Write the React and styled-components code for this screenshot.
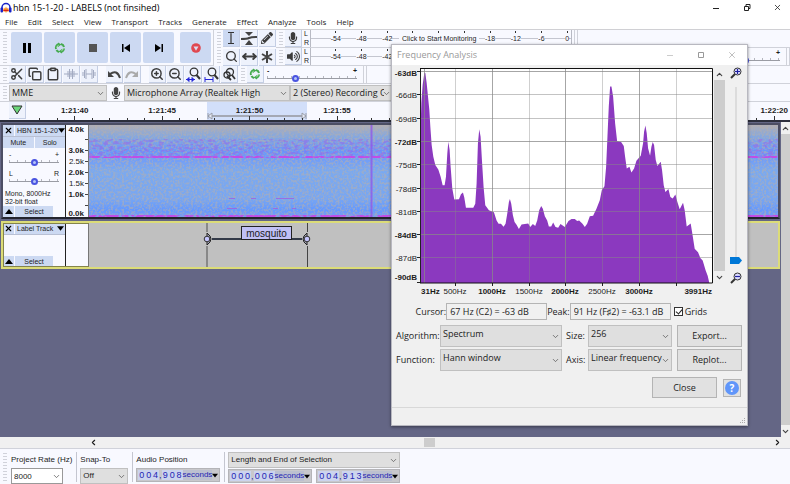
import { useId } from "react";
import styled, { createGlobalStyle } from "styled-components";
import {
  Scissors,
  Copy,
  Clipboard,
  Search,
  ZoomIn,
  ZoomOut,
  MoveHorizontal,
  Asterisk,
  ChevronDown,
  ChevronUp,
  ChevronLeft,
  ChevronRight,
  X,
} from "lucide-react";
import { FaMicrophone, FaVolumeUp, FaPencilAlt } from "react-icons/fa";

const GlobalStyle = createGlobalStyle`
  * {
    box-sizing: border-box;
  }

  body {
    margin: 0;
    background: #f8f9ff;
    color: #1c1c1c;
    font-family: "Open Sans", sans-serif;
    font-size: 9px;
    line-height: 12px;
  }

  button, select, input {
    margin: 0;
    padding: 0;
    border: 0;
    border-radius: 0;
    color: inherit;
    font: inherit;
    outline: none;
  }

  svg {
    display: block;
    flex: none;
  }
`;

const menus = ["File", "Edit", "Select", "View", "Transport", "Tracks", "Generate", "Effect", "Analyze", "Tools", "Help"];
const recordMarks = ["-54", "-48", "-42", "", "", "", "-18", "-12", "-6", "0"];
const playbackMarks = ["-54", "-48", "-42", "", "", "", "", "", "", ""];
const times = ["1:21:40", "1:21:45", "1:21:50", "1:21:55", "1:22:00", "1:22:05", "1:22:10", "1:22:15", "1:22:20"];
const dbLabels = [63, 66, 69, 72, 75, 78, 81, 84, 87, 90];
const boldDb = [63, 72, 84, 90];

const spectrum =
  "91,667 91,230 94,130 98,75 103,40 106,40 110,70 114,110 118,150 121,200 125,255 130,290 136,315 145,328 152,350 158,375 164,375 168,350 172,280 175,245 179,270 182,320 187,385 193,418 207,417 213,402 219,397 223,412 228,442 250,442 256,430 260,370 264,250 268,208 272,230 276,300 281,380 286,435 297,450 312,456 320,480 326,490 333,490 341,499 347,490 352,460 357,425 360,416 364,430 369,465 374,485 380,493 387,506 395,492 415,489 421,500 429,491 436,497 442,480 448,450 454,437 459,445 465,468 472,480 477,498 484,498 490,486 497,500 505,502 512,491 525,500 536,482 545,476 555,476 562,482 568,480 578,490 585,500 592,490 600,468 610,466 620,445 630,420 636,390 644,378 649,320 653,230 657,140 661,80 665,80 670,110 676,190 682,243 694,246 702,258 706,290 711,325 719,320 725,337 733,325 740,302 753,287 760,250 763,215 767,197 771,220 775,265 781,287 785,260 789,246 793,255 798,300 803,318 813,305 817,330 822,375 827,395 836,386 842,410 849,415 857,403 863,425 870,447 880,427 885,450 891,498 903,489 908,520 915,565 925,575 932,592 939,600 948,630 954,645 959,667";

const Logo = () => (
  <svg width="12" height="12" viewBox="0 0 24 24">
    <path d="M4 14V11a8 8 0 0 1 16 0v3" fill="none" stroke="#1822c8" strokeWidth="3" />
    <rect x="1" y="11" width="5" height="10" rx="2" fill="#1822c8" />
    <rect x="18" y="11" width="5" height="10" rx="2" fill="#1822c8" />
    <path d="M6 17l2-6 2 3 2-5 2 5 2-3 2 6-2 3-2-2-2 4-2-4-2 2z" fill="#f5821f" />
    <path d="M7 17h10" stroke="#d81e1e" strokeWidth="2" />
  </svg>
);

const LoopIcon = ({ size }) => (
  <svg width={size} height={size} viewBox="0 0 24 24">
    <path d="M4 14a8 8 0 0 1 6-10M14 4a8 8 0 0 1 6 6M20 13a8 8 0 0 1-6 7M10 20a8 8 0 0 1-5-4" fill="none" stroke="#46aa50" strokeWidth="4" />
    <path d="M8 1l7 4-7 5zM16 23l-7-4 7-5z" fill="#46aa50" />
    <path d="M5 12a7 7 0 0 1 5-6M19 12a7 7 0 0 1-5 6" fill="none" stroke="#9edba0" strokeWidth="1.5" />
  </svg>
);

const TransportIcon = ({ name }) => {
  if (name === "Play") return <LoopIcon size={12} />;
  return (
    <svg width="12" height="12" viewBox="0 0 12 12">
      {name === "Pause" && <path d="M2 1h3v10H2zM7 1h3v10H7z" fill="#000" />}
      {name === "Stop" && <path d="M2 2h8v8H2z" fill="#555" />}
      {name === "Skip to Start" && <path d="M2 2h1.500v8H2zM10 2v8L4 6z" fill="#000" />}
      {name === "Skip to End" && <path d="M8.500 2H10v8H8.500zM2 2v8l6-4z" fill="#000" />}
      {name === "Record" && (
        <>
          <circle cx="6" cy="6" r="4.800" fill="#e04850" />
          <path d="M3.500 4.500h5L6 8.800z" fill="#dcdcf0" />
        </>
      )}
    </svg>
  );
};

const SelectionIcon = () => (
  <svg width="12" height="14" viewBox="0 0 12 14">
    <path d="M3 1.500h2.500L6 2l.5-.5H9M6 2v10M3 12.500h2.500L6 12l.5.5H9" fill="none" stroke="#333" strokeWidth="1.200" />
  </svg>
);

const EnvelopeIcon = () => (
  <svg width="16" height="14" viewBox="0 0 16 14">
    <path d="M4 1h8L8 5zM4 14h8L8 9z" fill="#444" />
    <path d="M0 8q6 0 8-1t8-1" fill="none" stroke="#444" strokeWidth="2" />
  </svg>
);

const TrimIcon = ({ silence }) => (
  <svg width="14" height="12" viewBox="0 0 14 12">
    <path
      d={silence ? "M1 4v4M2.500 2v8M4 1v10M10 1v10M11.500 2v8M13 4v4M4 6h6" : "M0 6h14M4 3v6M5.500 1v10M7 3v6M8.500 1v10M10 3v6"}
      stroke="#a3abc2"
      fill="none"
    />
  </svg>
);

const UndoIcon = ({ redo }) => (
  <svg width="14" height="12" viewBox="0 0 14 12">
    <g transform={redo ? "matrix(-1 0 0 1 14 0)" : undefined}>
      <path d="M3 6q7-5 10 4" fill="none" stroke={redo ? "#aaa" : "#444"} strokeWidth="2" />
      <path d="M1 3v6h6z" fill={redo ? "#aaa" : "#444"} />
    </g>
  </svg>
);

const FitIcon = ({ kind }) => (
  <svg width="15" height="15" viewBox="0 0 15 15">
    <circle cx="8" cy="5" r="3.800" fill="none" stroke="#333" strokeWidth="1.300" />
    <path d="M10.500 8l3.500 4" stroke="#333" strokeWidth="2" />
    {kind === "selection" && <path d="M0 12.500h9M3 10.500v4l-2-2zM6 10.500v4l2-2z" stroke="#2424d8" fill="#2424d8" />}
    {kind === "project" && <path d="M1 10v5M9 10v5M1 12.500h8" stroke="#2424d8" fill="none" />}
  </svg>
);

const ZoomToggleIcon = () => (
  <svg width="14" height="14" viewBox="0 0 14 14">
    <circle cx="8" cy="5" r="3.500" fill="none" stroke="#333" strokeWidth="1.300" />
    <circle cx="5" cy="8" r="3" fill="none" stroke="#333" strokeWidth="1.300" />
    <path d="M10 8l3 4M5 9l4 4" stroke="#333" strokeWidth="1.800" />
  </svg>
);

const MagnifierIcon = ({ plus }) => (
  <svg width="12" height="12" viewBox="0 0 12 12">
    <path d="M1 11l4-4" stroke="#333" strokeWidth="2" />
    <circle cx="7.500" cy="4.500" r="3.500" fill="#dcdcff" stroke="#333" />
    <path d={plus ? "M5 4.500h5M7.500 2v5" : "M5 4.500h5"} stroke="#2020a0" strokeWidth="1.200" />
  </svg>
);

const Triangle = ({ up, size = 8 }) => (
  <svg width={size} height="5" viewBox="0 0 8 5">
    <path d={up ? "M0 5l4-5 4 5z" : "M0 0h8l-4 5z"} fill="#000" />
  </svg>
);

const Handle = ({ x, flip }) => (
  <g transform={`translate(${x} 16)`}>
    <path d={flip ? "M0-6q-8 6 0 12z" : "M0-6q8 6 0 12z"} fill="#a8a8b8" stroke="#222" />
    <circle r="2.800" fill="#c4c4fc" stroke="#333" />
  </g>
);

const Picker = ({ label, options, ...rest }) => (
  <PickerBox {...rest}>
    <select aria-label={label}>
      {options.map((o) => (
        <option key={o}>{o}</option>
      ))}
    </select>
    <ChevronDown size={9} strokeWidth={2} />
  </PickerBox>
);

const Meter = ({ label, message, icon, marks }) => (
  <MeterArea>
    <ToolButton aria-label={label}>{icon}</ToolButton>
    <Channels>
      <span>L</span>
      <span>R</span>
    </Channels>
    <MeterScale>
      <div className="marks">
        {marks.map((m, i) => (
          <span key={i}>{m && <b>{m}</b>}</span>
        ))}
      </div>
      {message && <button className="message">{message}</button>}
    </MeterScale>
  </MeterArea>
);

const Knob = ({ label, left, right, value, ...rest }) => (
  <KnobBox {...rest}>
    <span>
      <i>{left}</i>
      <i>{right}</i>
    </span>
    <Slider type="range" aria-label={label} defaultValue={value} />
  </KnobBox>
);

const TimeField = ({ label, digits }) => (
  <TimeBox role="group" aria-label={label}>
    {[...digits].map((d, i) => (
      <span key={i} className={d === "," ? "comma" : "digit"}>{d}</span>
    ))}
    <span className="unit">seconds</span>
    <button aria-label={`${label} format`}>
      <Triangle size={6} />
    </button>
  </TimeBox>
);

const Spectrogram = () => {
  const id = useId();
  return (
    <svg width="100%" height="100%" viewBox="0 0 689 92" preserveAspectRatio="none">
      <defs>
        <linearGradient id={`${id}base`} x2="0" y2="1">
          <stop offset="0" stopColor="#b0adb5" />
          <stop offset="0.12" stopColor="#86a8de" />
          <stop offset="0.28" stopColor="#6898fa" />
          <stop offset="0.36" stopColor="#709cf8" />
          <stop offset="0.5" stopColor="#7aa9f0" />
          <stop offset="0.8" stopColor="#78a6f2" />
          <stop offset="0.93" stopColor="#6398ff" />
          <stop offset="1" stopColor="#7a9cf0" />
        </linearGradient>
        <filter id={`${id}tan`} x="0" y="0" width="1" height="1" colorInterpolationFilters="sRGB">
          <feTurbulence type="fractalNoise" baseFrequency="0.45" numOctaves="2" seed="4" />
          <feColorMatrix values="0 0 0 0 0.72  0 0 0 0 0.69  0 0 0 0 0.67  4 0 0 0 -1.7" />
        </filter>
        <filter id={`${id}violet`} x="0" y="0" width="1" height="1" colorInterpolationFilters="sRGB">
          <feTurbulence type="fractalNoise" baseFrequency="0.2 0.4" numOctaves="2" seed="9" />
          <feColorMatrix values="0 0 0 0 0.6  0 0 0 0 0.38  0 0 0 0 0.92  5 0 0 0 -2.3" />
        </filter>
        <filter id={`${id}line`} x="0" y="0" width="1" height="1" colorInterpolationFilters="sRGB">
          <feTurbulence type="fractalNoise" baseFrequency="0.2 0.3" numOctaves="2" seed="2" />
          <feColorMatrix values="0 0 0 0 0.76  0 0 0 0 0.3  0 0 0 0 0.9  5 0 0 0 -1.6" />
        </filter>
      </defs>
      <rect width="689" height="92" fill={`url(#${id}base)`} />
      <rect width="689" height="92" filter={`url(#${id}tan)`} opacity="0.55" />
      <rect y="14" width="689" height="19" filter={`url(#${id}violet)`} opacity="0.5" />
      <rect y="31" width="689" height="2" filter={`url(#${id}line)`} />
      <rect y="90" width="689" height="2" filter={`url(#${id}line)`} />
      <path d="M282.500 0v92" stroke="#9058e8" strokeWidth="2" opacity="0.8" />
      <path d="M140 73.500h6M162 73.500h5M187 73.500h18M138 83.500h10M184 83.500h5M203 83.500h4" stroke="#a060e0" opacity="0.8" />
    </svg>
  );
};

const FrequencyPlot = () => (
  <svg width="320" height="232" viewBox="0 0 320 232" role="img" aria-label="Frequency spectrum">
    <rect x="26" y="2" width="292" height="215" fill="#fff" />
    <svg x="26" y="2" width="292" height="215" viewBox="90 25 877 642" preserveAspectRatio="none">
      <polygon points={spectrum} fill="#8b39bf" />
    </svg>
    {dbLabels.map((db, i) => {
      const y = 6 + Math.round(i * 23.3);
      return (
        <g key={db}>
          {i < 9 && <path d={`M26 ${y - 0.5}h292`} stroke="#888" strokeOpacity={boldDb.includes(db) ? 0.75 : 0.5} />}
          <path d={`M23 ${i < 9 ? y - 0.5 : 216.5}h3`} stroke="#222" />
          <text x="23" y={i < 9 ? y + (i ? 3 : 4) : 214} textAnchor="end" fontWeight={boldDb.includes(db) ? 700 : 400}>
            {`-${db}dB`}
          </text>
        </g>
      );
    })}
    {[30, 61, 98, 135, 171, 208, 245, 282].map((x, i) => (
      <path key={x} d={`M${x + 0.5} 2v215`} stroke="#888" strokeOpacity={i % 2 ? 0.4 : 0.75} />
    ))}
    {[500, 1000, 1500, 2000, 2500, 3000].map((hz, i) => (
      <g key={hz}>
        <path d={`M${61.5 + Math.round(i * 36.8)} 217v3`} stroke="#222" />
        <text x={61 + Math.round(i * 36.8)} y="228" textAnchor="middle" fontWeight={i % 2 ? 700 : 400}>{`${hz}Hz`}</text>
      </g>
    ))}
    <text x="27" y="228" fontWeight="700">31Hz</text>
    <text x="318" y="228" textAnchor="end" fontWeight="700">3991Hz</text>
    <path d="M282.500 217v3M26.500 2v215" stroke="#222" />
    <path d="M26 2.500h292.500V217H26" fill="none" stroke="#111" />
  </svg>
);

const FrequencyDialog = () => (
  <Dialog role="dialog" aria-label="Frequency Analysis">
    <DialogTitle>
      <h2>Frequency Analysis</h2>
      <button aria-label="Minimize">
        <svg width="8" height="8"><path d="M1 4.500h6" stroke="#ccc" /></svg>
      </button>
      <button aria-label="Maximize">
        <svg width="8" height="8"><path d="M1.500 1.500h5v5h-5z" fill="none" stroke="#999" /></svg>
      </button>
      <button aria-label="Close window"><X size={10} strokeWidth={1.5} /></button>
    </DialogTitle>
    <PlotRow>
      <FrequencyPlot />
      <VScroll>
        <button aria-label="Scroll up"><ChevronUp size={9} strokeWidth={3} /></button>
        <div className="thumb" />
        <button aria-label="Scroll down"><ChevronDown size={9} strokeWidth={3} /></button>
      </VScroll>
      <ZoomColumn>
        <MagnifierIcon plus />
        <input type="range" aria-label="Vertical zoom" defaultValue={0} />
        <MagnifierIcon />
      </ZoomColumn>
    </PlotRow>
    <Readout>
      <label htmlFor="cursor">Cursor:</label>
      <input id="cursor" type="text" readOnly value="67 Hz (C2) = -63 dB" />
      <label htmlFor="peak">Peak:</label>
      <input id="peak" type="text" readOnly value="91 Hz (F♯2) = -63.1 dB" />
      <label className="check">
        <input type="checkbox" defaultChecked />
        Grids
      </label>
    </Readout>
    <Settings>
      <span>Algorithm:</span>
      <Picker label="Algorithm" options={["Spectrum"]} $raised />
      <span>Size:</span>
      <Picker label="Size" options={["256"]} $raised />
      <PushButton>Export...</PushButton>
      <span>Function:</span>
      <Picker label="Function" options={["Hann window"]} $raised />
      <span>Axis:</span>
      <Picker label="Axis" options={["Linear frequency"]} $raised />
      <PushButton>Replot...</PushButton>
    </Settings>
    <Actions>
      <PushButton>Close</PushButton>
      <HelpButton aria-label="Help"><b>?</b></HelpButton>
    </Actions>
    <StatusBar>
      <svg width="6" height="6" viewBox="0 0 6 6">
        <path d="M4 0h1v1H4zM2 2h1v1H2zM4 2h1v1H4zM0 4h1v1H0zM2 4h1v1H2zM4 4h1v1H4z" fill="#aaa" />
      </svg>
    </StatusBar>
  </Dialog>
);

const App = () => (
  <Page>
    <GlobalStyle />
    <TitleBar>
      <Logo />
      <h1>hbn 15-1-20 - LABELS (not finsihed)</h1>
      <button aria-label="Minimize">
        <svg width="8" height="8"><path d="M1 4.500h6" stroke="#222" /></svg>
      </button>
      <button aria-label="Restore">
        <svg width="8" height="8"><path d="M1.500 2.500h4v4h-4zM3 2.500V.5h4v4H5.500" fill="none" stroke="#222" /></svg>
      </button>
      <button aria-label="Close"><X size={9} strokeWidth={2} /></button>
    </TitleBar>
    <MenuBar>
      {menus.map((m) => (
        <button key={m}>{m}</button>
      ))}
    </MenuBar>

    <TopTools>
      <Transport>
        <Grip />
        {["Pause", "Play", "Stop", "Skip to Start", "Skip to End", "Record"].map((name) => (
          <TransportButton key={name} aria-label={name} $apart={name === "Record"}>
            <TransportIcon name={name} />
          </TransportButton>
        ))}
      </Transport>
      <Grip />
      <ToolGrid>
        <ToolButton aria-label="Selection Tool" $active><SelectionIcon /></ToolButton>
        <ToolButton aria-label="Envelope Tool"><EnvelopeIcon /></ToolButton>
        <ToolButton aria-label="Draw Tool"><FaPencilAlt size={12} /></ToolButton>
        <ToolButton aria-label="Zoom Tool"><Search size={13} strokeWidth={2.5} /></ToolButton>
        <ToolButton aria-label="Time Shift Tool"><MoveHorizontal size={15} strokeWidth={3} /></ToolButton>
        <ToolButton aria-label="Multi Tool">
          <svg width="14" height="14" viewBox="0 0 14 14">
            <path d="M7 1v12M2 4l10 6M12 4L2 10" stroke="#444" strokeWidth="2" />
          </svg>
        </ToolButton>
      </ToolGrid>
      <MeterRows>
        <ToolRow>
          <Grip />
          <Meter label="Record Meter" marks={recordMarks} message="Click to Start Monitoring" icon={<FaMicrophone size={12} />} />
          <Grip $line />
        </ToolRow>
        <ToolRow>
          <Grip />
          <Meter label="Playback Meter" marks={playbackMarks} icon={<FaVolumeUp size={13} />} />
          <Knob label="Playback Volume" left="-" right="+" value={63} $end />
          <Grip $line />
        </ToolRow>
      </MeterRows>
    </TopTools>

    <ToolRow>
      <Grip />
      <ButtonGroup>
        <ToolButton aria-label="Cut"><Scissors size={14} strokeWidth={2.5} /></ToolButton>
        <ToolButton aria-label="Copy"><Copy size={14} strokeWidth={2.5} /></ToolButton>
        <ToolButton aria-label="Paste"><Clipboard size={14} strokeWidth={2.5} /></ToolButton>
        <ToolButton aria-label="Trim"><TrimIcon /></ToolButton>
        <ToolButton aria-label="Silence"><TrimIcon silence /></ToolButton>
      </ButtonGroup>
      <ButtonGroup>
        <ToolButton aria-label="Undo"><UndoIcon /></ToolButton>
        <ToolButton aria-label="Redo"><UndoIcon redo /></ToolButton>
      </ButtonGroup>
      <ButtonGroup>
        <ToolButton aria-label="Zoom In"><ZoomIn size={14} strokeWidth={2.5} /></ToolButton>
        <ToolButton aria-label="Zoom Out"><ZoomOut size={14} strokeWidth={2.5} /></ToolButton>
        <ToolButton aria-label="Fit Selection"><FitIcon kind="selection" /></ToolButton>
        <ToolButton aria-label="Fit Project"><FitIcon kind="project" /></ToolButton>
        <ToolButton aria-label="Zoom Toggle"><ZoomToggleIcon /></ToolButton>
      </ButtonGroup>
      <Grip />
      <ToolButton aria-label="Play at Speed"><LoopIcon size={12} /></ToolButton>
      <Knob label="Playback Speed" left="-" right="+" value={30} />
      <Grip $line />
    </ToolRow>

    <ToolRow>
      <Grip />
      <Picker label="Audio Host" options={["MME"]} $width="98px" />
      <DeviceIcon><FaMicrophone size={12} /></DeviceIcon>
      <Picker label="Recording Device" options={["Microphone Array (Realtek High"]} $width="166px" />
      <Picker label="Recording Channels" options={["2 (Stereo) Recording C"]} $width="103px" />
    </ToolRow>

    <Timeline>
      <ToolButton aria-label="Pinned Play Head">
        <svg width="12" height="10" viewBox="0 0 12 10"><path d="M1 1h10L6 9z" fill="#6cd67a" stroke="#333" /></svg>
      </ToolButton>
      <Ruler>
        <TimeSelection>
          <svg width="100%" height="8" viewBox="0 0 100 8" preserveAspectRatio="none">
            <path d="M1 4h98" stroke="#a4a8b4" strokeWidth="2" />
            <path d="M1 1v6M1 4l4-3v6zM99 1v6M99 4l-4-3v6z" fill="#e4e8f4" stroke="#9a9ea8" />
          </svg>
        </TimeSelection>
        <div className="scale">
          {times.map((t) => (
            <Tick key={t}>
              <b>{t}</b>
              <span>
                <i /><i /><i /><i /><i />
              </span>
            </Tick>
          ))}
        </div>
      </Ruler>
    </Timeline>

    <Workspace>
      <Tracks>
        <Track>
          <TrackPanel>
            <TrackHeader>
              <button aria-label="Close track"><X size={9} strokeWidth={3} color="#000" /></button>
              <button className="name">HBN 15-1-20<Triangle size={7} /></button>
            </TrackHeader>
            <MuteSolo>
              <button>Mute</button>
              <button>Solo</button>
            </MuteSolo>
            <Knobs>
              <Knob label="Gain" left="-" right="+" value={50} />
              <Knob label="Pan" left="L" right="R" value={50} />
            </Knobs>
            <p>
              Mono, 8000Hz
              <br />
              32-bit float
            </p>
            <TrackFooter>
              <button aria-label="Collapse track"><Triangle up /></button>
              <button className="select">Select</button>
            </TrackFooter>
          </TrackPanel>
          <Frequencies>
            <b>4.0k</b>
            <span className="tick" />
            <b className="tick">3.0k</b>
            <span className="tick">2.5k</span>
            <b className="tick">2.0k</b>
            <span className="tick">1.5k</span>
            <b className="tick">1.0k</b>
            <span className="tick" />
            <b>0.0k</b>
          </Frequencies>
          <TrackContent $height="92px">
            <Spectrogram />
          </TrackContent>
        </Track>
        <Track $focused>
          <TrackPanel>
            <TrackHeader>
              <button aria-label="Close track"><X size={9} strokeWidth={3} color="#000" /></button>
              <button className="name">Label Track<Triangle size={7} /></button>
            </TrackHeader>
            <TrackFooter>
              <button aria-label="Collapse track"><Triangle up /></button>
              <button className="select">Select</button>
            </TrackFooter>
          </TrackPanel>
          <Frequencies />
          <TrackContent $height="44px">
            <LabelRegion>
              <svg width="108" height="44" viewBox="0 0 108 44">
                <path d="M4 0v9M4 23v21" stroke="#888" strokeWidth="2" />
                <path d="M104.500 0v9M104.500 23v21" stroke="#444" />
                <path d="M9 16h90" stroke="#333a48" strokeWidth="2" />
                <Handle x={4} />
                <Handle x={104} flip />
              </svg>
              <button>mosquito</button>
            </LabelRegion>
          </TrackContent>
        </Track>
      </Tracks>
      <VScroll $wide>
        <button aria-label="Scroll up"><ChevronUp size={9} strokeWidth={3} /></button>
        <div className="thumb" />
        <button aria-label="Scroll down"><ChevronDown size={9} strokeWidth={3} /></button>
      </VScroll>
    </Workspace>

    <HScroll>
      <button aria-label="Scroll left"><ChevronLeft size={9} strokeWidth={3} /></button>
      <div className="track">
        <div className="thumb" />
      </div>
      <button aria-label="Scroll right"><ChevronRight size={9} strokeWidth={3} /></button>
    </HScroll>

    <SelectionBar>
      <Grip />
      <Field>
        <label htmlFor="rate">Project Rate (Hz)</label>
        <PickerBox $width="52px" $white>
          <input id="rate" defaultValue="8000" />
          <ChevronDown size={9} strokeWidth={2} />
        </PickerBox>
      </Field>
      <Field $line>
        <span>Snap-To</span>
        <Picker label="Snap-To" options={["Off"]} $width="48px" />
      </Field>
      <Field $line>
        <span>Audio Position</span>
        <TimeField label="Audio Position" digits="004,908" />
      </Field>
      <Field $line>
        <Picker label="Selection mode" options={["Length and End of Selection"]} />
        <TimeFields>
          <TimeField label="Length" digits="000,006" />
          <TimeField label="End" digits="004,913" />
        </TimeFields>
      </Field>
    </SelectionBar>

    <FrequencyDialog />
  </Page>
);

const Page = styled.main`
  position: relative;
  display: flex;
  flex-direction: column;
  min-height: 100vh;
  overflow: hidden;
`;

const TitleBar = styled.header`
  display: flex;
  align-items: center;
  height: 15px;
  background: #fff;

  h1 {
    flex: 1;
    margin: 0 0 0 1px;
    font-size: 9px;
    font-weight: 400;
    color: #000;
  }

  button {
    display: grid;
    place-items: center;
    width: 31px;
    height: 15px;
    background: none;
  }

  button:last-child {
    margin-right: -3px;
  }
`;

const MenuBar = styled.nav`
  display: flex;
  gap: 10px;
  height: 15px;
  padding-left: 5px;
  background: #fff;
  border-bottom: 1px solid #d0d0d4;
  font-size: 8px;

  button {
    background: none;
  }
`;

const Grip = styled.span`
  flex: none;
  align-self: stretch;
  width: 4px;
  margin: 2px 2px 2px 3px;
  background: repeating-linear-gradient(#d0d2da 0 1px, transparent 1px 3px);
  ${({ $line }) => $line && "background: none; margin: 0 0 0 2px; border: solid #d0d2da; border-width: 0 1px;"}
`;

const TopTools = styled.div`
  display: flex;
  height: 36px;
`;

const Transport = styled.div`
  display: flex;
  align-items: center;
  gap: 2px;
  padding-right: 2px;
  border-right: 1px solid #d0d2da;
  border-bottom: 1px solid #d0d2da;

  > span {
    margin-right: 2px;
  }
`;

const TransportButton = styled.button`
  display: grid;
  place-items: center;
  width: 31px;
  height: 31px;
  margin-left: ${({ $apart }) => ($apart ? "4px" : "0")};
  border-radius: 2px;
  background: #ccd9f2;
`;

const ToolButton = styled.button`
  display: grid;
  flex: none;
  place-items: center;
  width: 17px;
  height: 17px;
  background: ${({ $active }) => ($active ? "#ccd9f2" : "#eef2fc")};
  border-right: 1px solid #c4cee4;
  border-bottom: 1px solid #c4cee4;
  color: #3c3c3c;
  overflow: hidden;
`;

const ToolGrid = styled.div`
  display: grid;
  grid-template-columns: repeat(3, 17px);
  gap: 1px;
`;

const ButtonGroup = styled.div`
  display: flex;
  gap: 1px;
  margin-right: 8px;

  &:nth-of-type(3) {
    margin-right: 0;
  }
`;

const MeterRows = styled.div`
  flex: 1;
  min-width: 0;
`;

const ToolRow = styled.div`
  display: flex;
  align-items: center;
  height: 18px;
  border-bottom: 1px solid #d0d2da;
`;

const MeterArea = styled.div`
  display: flex;
  flex: 0 0 287px;
`;

const Channels = styled.div`
  display: flex;
  flex-direction: column;
  justify-content: space-between;
  width: 8px;
  padding-left: 2px;
  font: 7px/8px "Liberation Sans", sans-serif;
`;

const MeterScale = styled.div`
  position: relative;
  flex: 1;
  overflow: hidden;
  border-left: 1px solid #b8bac4;
  border-right: 1px solid #b8bac4;
  background: linear-gradient(#c4c6d0, #c4c6d0) 0 8px / 100% 1px no-repeat;
  font: 7px/8px "Liberation Sans", sans-serif;

  .marks {
    display: flex;
    margin: 0 -9px 0 12px;
  }

  .marks span {
    flex: 1;
    height: 17px;
    padding-top: 5px;
    background: linear-gradient(#333, #333) center 1px / 1px 2px no-repeat;
    text-align: center;
  }

  .marks b {
    font-weight: 400;
    background: #f8f9ff;
  }

  .message {
    position: absolute;
    left: 88px;
    top: 5px;
    padding: 0 3px;
    background: #f8f9ff;
    white-space: nowrap;
  }
`;

const KnobBox = styled.div`
  display: flex;
  flex-direction: column;
  flex: none;
  width: 90px;
  margin: 0 4px 0 ${({ $end }) => ($end ? "auto" : "3px")};
  font: 7px/7px "Liberation Sans", sans-serif;

  span {
    display: flex;
    justify-content: space-between;
    font-weight: 700;
  }

  i {
    font-style: normal;
  }
`;

const Slider = styled.input`
  appearance: none;
  width: 100%;
  height: 8px;
  background:
    linear-gradient(#9a9ca4, #9a9ca4) 0 4px / 100% 1px no-repeat,
    repeating-linear-gradient(90deg, #b4b6be 0 1px, transparent 1px 8px) 0 2px / 100% 2px no-repeat;

  &::-webkit-slider-thumb {
    appearance: none;
    width: 7px;
    height: 7px;
    border: 2px solid #4a54e0;
    border-radius: 50%;
    background: #b4c4f8;
  }
`;

const PickerBox = styled.div`
  position: relative;
  flex: none;
  width: ${({ $width }) => $width || "100%"};

  select, input {
    appearance: none;
    display: block;
    width: 100%;
    height: ${({ $raised }) => ($raised ? "22px" : "16px")};
    padding: ${({ $raised }) => ($raised ? "0 8px 4px 2px" : "0 8px 0 2px")};
    border: 1px solid ${({ $white }) => ($white ? "#999" : "#c0c0c0")};
    background: ${({ $white }) => ($white ? "#fff" : "#dfdfdf")};
  }

  svg {
    position: absolute;
    right: 2px;
    bottom: ${({ $raised }) => ($raised ? "6px" : "3px")};
    color: #555;
    pointer-events: none;
  }
`;

const DeviceIcon = styled.span`
  display: grid;
  place-items: center;
  width: 17px;
  color: #444;
`;

const Timeline = styled.div`
  display: flex;
  height: 20px;
  padding-left: 9px;
  border-bottom: 2px solid #2c2e3c;
`;

const Ruler = styled.div`
  position: relative;
  flex: 1;
  margin-left: 5px;
  overflow: hidden;

  .scale {
    position: relative;
    display: flex;
    margin-right: -28px;
  }
`;

const TimeSelection = styled.div`
  position: absolute;
  left: 176px;
  top: 0;
  display: flex;
  align-items: flex-end;
  width: 100px;
  height: 18px;
  background: #d2dffa;
`;

const Tick = styled.div`
  flex: 1;
  text-align: center;
  font: 8px/10px "Liberation Sans", sans-serif;
  padding-top: 4px;

  b {
    display: block;
  }

  span {
    display: flex;
  }

  i {
    flex: 1;
    height: 4px;
    background: linear-gradient(#333, #333) center bottom / 1px 2px no-repeat;
  }

  i:nth-child(3) {
    background-size: 1px 4px;
  }
`;

const Workspace = styled.section`
  display: flex;
  flex: 1;
  background: #646685;
`;

const Tracks = styled.div`
  display: flex;
  flex-direction: column;
  flex: 1;
  gap: 2px;
  min-width: 0;
  padding: 1px 1px 0 1px;
`;

const Track = styled.article`
  display: flex;
  border: 2px solid ${({ $focused }) => ($focused ? "#dcdc78" : "#4c4e64")};
  border-bottom-color: ${({ $focused }) => ($focused ? "#dcdc78" : "#23242e")};
  outline: ${({ $focused }) => ($focused ? "1px solid #84844c" : "none")};
  outline-offset: -3px;
`;

const TrackPanel = styled.div`
  display: flex;
  flex-direction: column;
  flex: none;
  width: 63px;
  background: #f8f9ff;
  border-right: 1px solid #222;
  font: 7px/8px "Liberation Sans", sans-serif;

  button {
    background: #ccd9f2;
  }

  p {
    margin: 5px 0 0 2px;
  }
`;

const TrackHeader = styled.div`
  display: flex;
  gap: 1px;
  height: 12px;
  border-bottom: 1px solid #b8c0d4;

  button {
    display: flex;
    align-items: center;
    justify-content: center;
    width: 11px;
  }

  .name {
    flex: 1;
    justify-content: space-between;
    padding: 0 1px 0 2px;
    white-space: nowrap;
  }
`;

const MuteSolo = styled.div`
  display: flex;
  gap: 1px;

  button {
    flex: 1;
    height: 11px;
  }
`;

const Knobs = styled.div`
  display: flex;
  flex-direction: column;
  gap: 4px;
  padding: 3px 6px 0;

  ${KnobBox} {
    width: 50px;
    margin: 0;
  }

  span {
    font-weight: 400;
  }
`;

const TrackFooter = styled.div`
  display: flex;
  gap: 1px;
  margin-top: auto;

  button {
    display: grid;
    place-items: center;
    width: 11px;
    height: 11px;
  }

  .select {
    width: 38px;
  }
`;

const Frequencies = styled.div`
  display: flex;
  flex-direction: column;
  flex: none;
  width: 23px;
  padding-top: 1px;
  background: #f8f9ff;
  border-right: 1px solid #777;
  font: 8px/8px "Liberation Sans", sans-serif;

  b, span {
    padding-right: 4px;
    text-align: right;
  }

  b:last-child {
    line-height: 6px;
  }

  .tick {
    display: flex;
    flex: 1;
    align-items: center;
    justify-content: flex-end;
    background: linear-gradient(#444, #444) right center / 3px 1px no-repeat;
  }
`;

const TrackContent = styled.div`
  position: relative;
  flex: 1;
  min-width: 0;
  height: ${({ $height }) => $height};
  background: #c0c0c0;
`;

const LabelRegion = styled.div`
  position: absolute;
  left: 114px;
  top: 0;

  button {
    position: absolute;
    left: 38px;
    top: 3px;
    width: 51px;
    height: 14px;
    border: 1px solid #222;
    background: #c0c0f6;
    font: 10px/11px "Liberation Sans", sans-serif;
  }
`;

const VScroll = styled.div`
  display: flex;
  flex-direction: column;
  flex: none;
  width: ${({ $wide }) => ($wide ? "9px" : "11px")};
  background: #f0f0f0;

  button {
    display: grid;
    place-items: center;
    height: 12px;
    background: none;
    color: #444;
  }

  .thumb {
    flex: 1;
    background: #cdcdcd;
  }
`;

const HScroll = styled.div`
  display: flex;
  height: 12px;
  padding: 0 8px 0 89px;
  background: #f0f0f0;
  border-bottom: 1px solid #d0d2da;

  button {
    background: none;
  }

  .track {
    flex: 1;
    padding: 1px 0 0 4px;
  }

  .thumb {
    width: 11px;
    height: 9px;
    margin-left: 48%;
    background: #cdcdcd;
  }
`;

const SelectionBar = styled.footer`
  display: flex;
  height: 35px;
  padding-top: 2px;
  font: 8px/10px "Liberation Sans", sans-serif;
`;

const Field = styled.div`
  display: flex;
  flex-direction: column;
  justify-content: space-between;
  gap: 1px;
  margin: 1px 4px 2px 2px;
  ${({ $line }) => $line && "padding-left: 3px; margin-left: 0; border-left: 1px solid #c4c6d0;"}

  > label, > span {
    padding: 3px 0 2px;
    white-space: nowrap;
  }
`;

const TimeFields = styled.div`
  display: flex;
  gap: 4px;
`;

const TimeBox = styled.div`
  display: flex;
  align-items: center;
  width: 84px;
  height: 14px;
  padding: 1px;
  border: 1px solid #b4b4b8;
  background: #c8c8cc;
  color: #2424b4;
  font-size: 9px;

  .digit {
    width: 7px;
    text-align: center;
    background: #ccd4ee;
  }

  .comma {
    width: 3px;
  }

  .unit {
    flex: 1;
    font-size: 8px;
    background: #bcc0d0;
  }

  button {
    display: grid;
    place-items: center;
    width: 6px;
    height: 10px;
    background: none;
  }
`;

const Dialog = styled.section`
  position: absolute;
  left: 391px;
  top: 44px;
  width: 357px;
  background: #f0f0f0;
  border: 1px solid #b8b8c0;
  box-shadow: 0 1px 3px rgba(0, 0, 0, 0.45);
`;

const DialogTitle = styled.div`
  display: flex;
  align-items: center;
  height: 20px;
  padding-left: 5px;
  background: #fff;
  color: #999;

  h2 {
    flex: 1;
    margin: 0;
    font-size: 9px;
    font-weight: 400;
  }

  button {
    display: grid;
    place-items: center;
    width: 31px;
    background: none;
  }
`;

const PlotRow = styled.div`
  display: flex;
  padding: 1px 0 0 2px;

  text {
    font: 8px "Liberation Sans", sans-serif;
    fill: #1c1c1c;
  }

  text[font-weight="700"] {
    font-weight: 700;
  }

  ${VScroll} {
    margin: 2px 0 15px;
  }
`;

const ZoomColumn = styled.div`
  display: flex;
  flex-direction: column;
  align-items: center;
  flex: 1;
  margin: 1px 0 14px;

  input {
    appearance: none;
    flex: 1;
    width: 12px;
    min-height: 0;
    margin: 8px 0;
    writing-mode: vertical-lr;
    direction: rtl;
    background: linear-gradient(#dcdcdc, #dcdcdc) center / 2px 100% no-repeat;
  }

  input::-webkit-slider-thumb {
    appearance: none;
    width: 12px;
    height: 7px;
    background: #0078d7;
    clip-path: polygon(0 0, 75% 0, 100% 50%, 75% 100%, 0 100%);
  }
`;

const Readout = styled.div`
  display: flex;
  align-items: center;
  justify-content: flex-end;
  margin: 5px 40px 5px 0;

  input[type="text"] {
    width: 101px;
    height: 17px;
    padding-left: 3px;
    border: 1px solid #b4b4b4;
    background: #f0f0f0;
  }

  .check {
    display: flex;
    align-items: center;
    gap: 2px;
    margin-left: 3px;
  }

  input[type="checkbox"] {
    appearance: none;
    width: 9px;
    height: 9px;
    border: 1px solid #333;
    background: #fff;
  }

  input[type="checkbox"]::before {
    content: "";
    display: block;
    width: 3px;
    height: 5px;
    margin: 0 0 0 2px;
    border: solid #222;
    border-width: 0 1px 1px 0;
    transform: rotate(40deg);
  }
`;

const Settings = styled.div`
  display: grid;
  grid-template-columns: 40px 122px 18px 84px 1fr;
  align-items: center;
  gap: 2px 4px;
  padding: 0 5px 0 4px;

  > button {
    margin-left: 1px;
  }
`;

const PushButton = styled.button`
  height: 22px;
  border: 1px solid #b4b4b4;
  background: #e1e1e1;
`;

const Actions = styled.div`
  display: flex;
  align-items: center;
  justify-content: flex-end;
  gap: 6px;
  padding: 6px 6px 9px 0;

  ${PushButton} {
    width: 65px;
    height: 21px;
  }
`;

const HelpButton = styled.button`
  display: grid;
  place-items: center;
  width: 18px;
  height: 18px;
  border: 1px solid #b4b4b4;
  background: #e1e1e1;

  b {
    width: 14px;
    height: 14px;
    border-radius: 50%;
    background: #6096fa;
    color: #fff;
    font-size: 10px;
    line-height: 14px;
  }
`;

const StatusBar = styled.div`
  display: flex;
  align-items: flex-end;
  justify-content: flex-end;
  height: 18px;
  padding: 1px;
  border-top: 1px solid #d8d8d8;
`;

export default App;
